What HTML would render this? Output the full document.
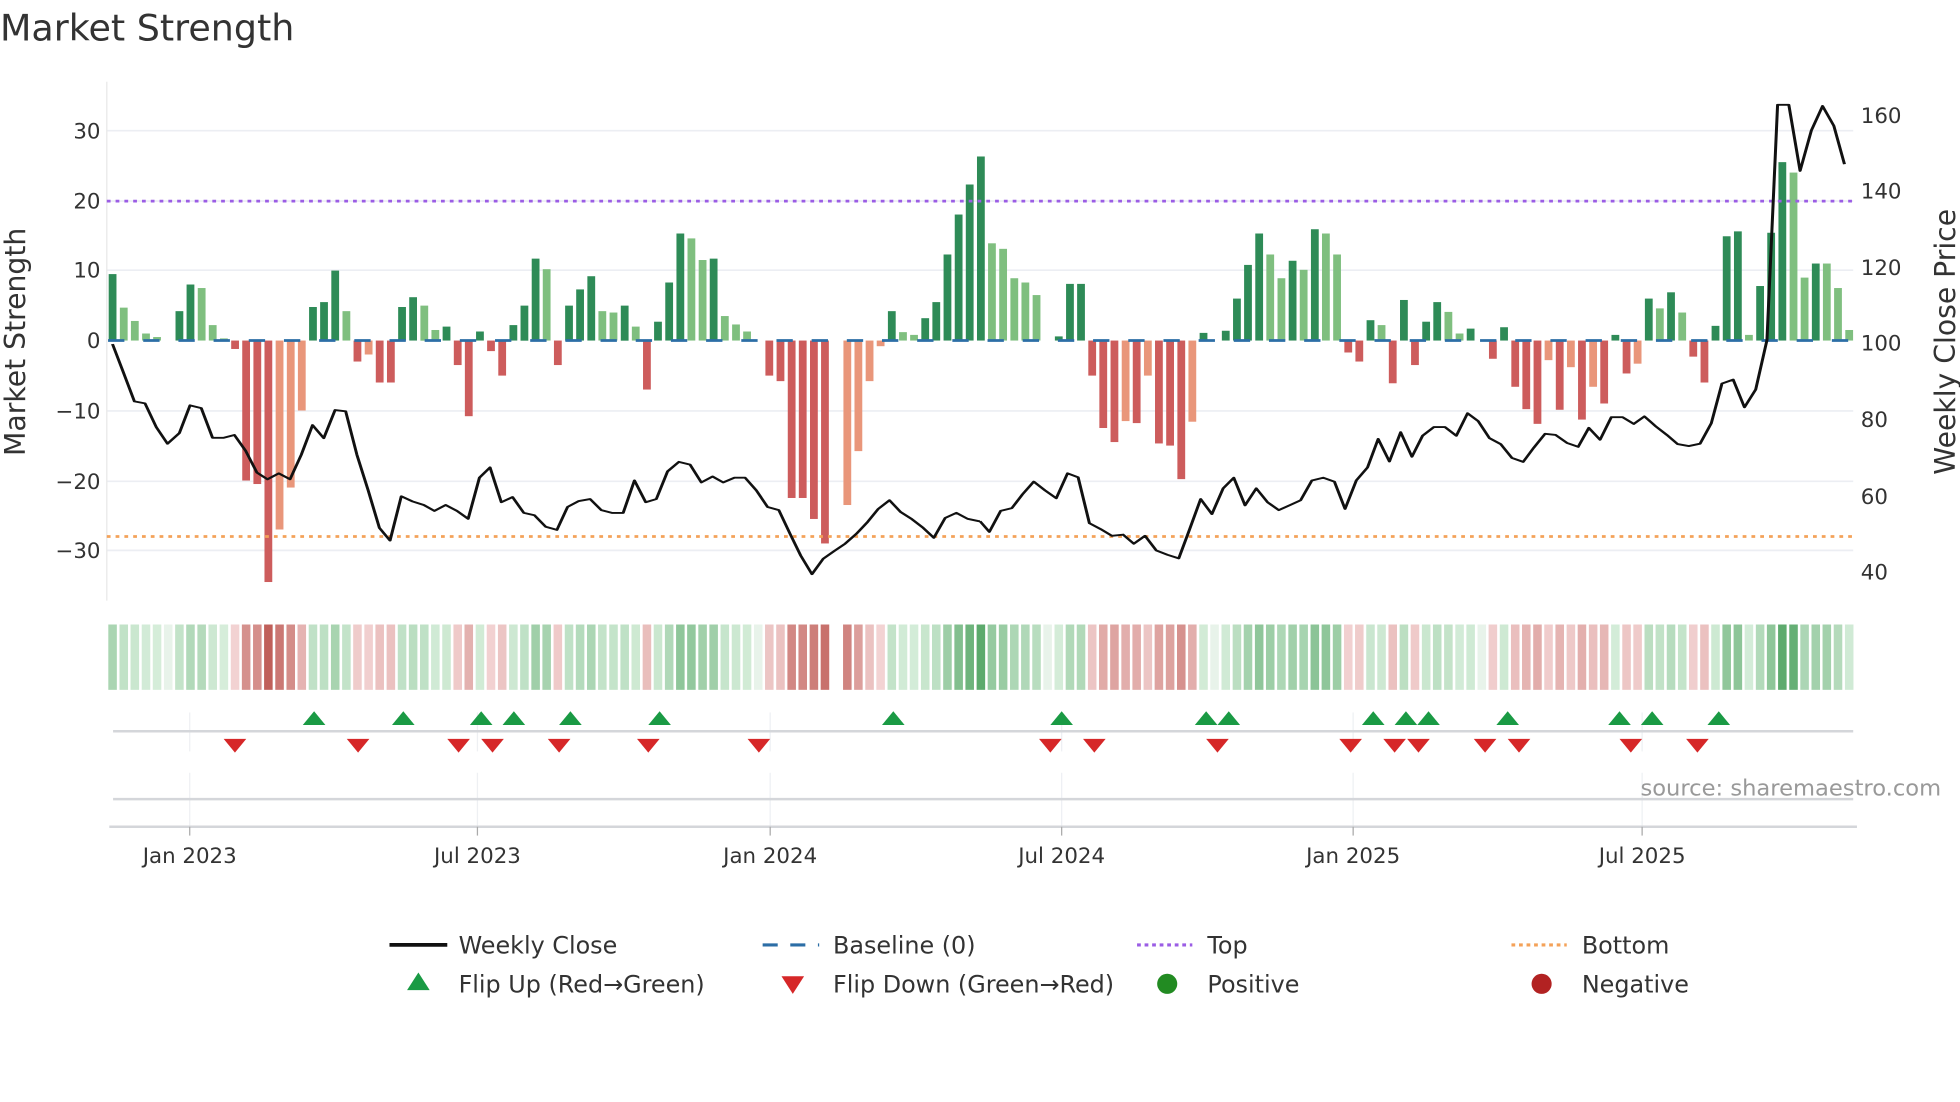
<!DOCTYPE html>
<html><head><meta charset="utf-8"><style>
html,body{margin:0;padding:0;background:#fff;}
svg{display:block;font-family:"DejaVu Sans","Liberation Sans",sans-serif;}
</style></head><body>
<svg id="s" width="1960" height="1102" viewBox="0 0 1560 877" xmlns="http://www.w3.org/2000/svg">
<rect width="1560" height="877" fill="#fff"/>
<text x="0" y="32" font-size="29" fill="#333">Market Strength</text>
<g stroke="#eceef3" stroke-width="1.3">
<line x1="85" x2="1475" y1="104" y2="104"/><line x1="85" x2="1475" y1="160" y2="160"/>
<line x1="85" x2="1475" y1="215" y2="215"/><line x1="85" x2="1475" y1="327" y2="327"/>
<line x1="85" x2="1475" y1="383" y2="383"/><line x1="85" x2="1475" y1="438" y2="438"/>
</g>
<line x1="85" x2="85" y1="65" y2="478" stroke="#e8e8e8" stroke-width="1"/>
<g font-size="17" fill="#333" text-anchor="end">
<text x="80" y="110">30</text><text x="80" y="166">20</text><text x="80" y="221">10</text>
<text x="80" y="277">0</text><text x="80" y="333">−10</text><text x="80" y="389">−20</text><text x="80" y="444">−30</text>
</g>
<g font-size="17" fill="#333">
<text x="1481" y="98">160</text><text x="1481" y="158">140</text><text x="1481" y="219">120</text>
<text x="1481" y="279">100</text><text x="1481" y="340">80</text><text x="1481" y="401">60</text><text x="1481" y="461">40</text>
</g>
<text transform="translate(20,272) rotate(-90)" font-size="22.5" fill="#333" text-anchor="middle">Market Strength</text>
<text transform="translate(1556,272) rotate(-90)" font-size="22.5" fill="#333" text-anchor="middle">Weekly Close Price</text>
<g id="bars"></g>
<line x1="86" x2="1475" y1="271" y2="271" stroke="#2c6ea6" stroke-width="2.2" stroke-dasharray="13,15"/>
<line x1="85" x2="1475" y1="160" y2="160" stroke="#9b5de5" stroke-width="2.2" stroke-dasharray="3,4"/>
<line x1="85" x2="1475" y1="427" y2="427" stroke="#f4a259" stroke-width="2.2" stroke-dasharray="3,4"/>
<g fill="none" stroke="#111" stroke-width="2.2" stroke-linejoin="round">
<polyline transform="scale(0.4975,0.3147)" stroke-width="4.8" points="180,870 197,940 215,1015 232,1020 250,1080 268,1122 287,1095 304,1025 322,1032 340,1107 358,1107 375,1100 393,1140 411,1195 428,1212 446,1197 464,1212 482,1150 500,1075 518,1108 536,1037 553,1040 571,1150 589,1240 607,1335 624,1367 642,1255 660,1268 678,1277 695,1292 713,1277 731,1292 749,1312 767,1208 784,1182 802,1270 820,1257 838,1297 855,1303 873,1332 891,1340 908,1282 926,1267 944,1262 962,1290 979,1297 997,1297 1015,1215 1033,1270 1050,1262 1068,1192 1086,1168 1104,1175 1122,1220 1140,1205 1157,1220 1175,1208 1192,1208 1210,1240 1228,1282 1246,1290 1264,1350 1281,1405 1299,1452 1317,1413 1335,1393 1352,1375 1370,1350 1388,1320 1405,1287 1423,1265 1441,1295 1459,1313 1477,1335 1494,1360 1512,1310 1530,1297 1548,1312 1566,1318 1568,1318"/>
<polyline transform="translate(780,0) scale(0.4975,0.3147)" stroke-width="4.8" points="0,1318 15,1345 33,1292 51,1285 68,1250 86,1218 104,1240 122,1260 140,1197 157,1207 175,1323 193,1338 211,1355 229,1352 246,1375 264,1355 282,1392 300,1403 318,1412 335,1340 353,1262 371,1300 389,1235 406,1208 424,1278 442,1235 460,1270 478,1290 495,1278 513,1265 531,1215 549,1208 567,1218 584,1287 602,1215 620,1182 637,1110 655,1167 673,1093 691,1155 708,1102 726,1080 744,1080 762,1102 780,1045 797,1065 815,1108 833,1123 851,1158 869,1168 886,1132 904,1097 921,1100 939,1120 957,1130 974,1082 992,1112 1010,1055 1028,1055 1046,1072 1063,1053 1081,1078 1099,1100 1116,1123 1134,1128 1152,1122 1170,1070 1187,970 1205,960 1223,1030 1241,985 1259,860 1276,265 1294,265 1312,432 1330,330 1348,268 1366,318 1383,415"/>
</g>
<g id="heat"></g>
<g stroke="#eef0f3" stroke-width="1">
<line x1="151" x2="151" y1="567" y2="598"/><line x1="380" x2="380" y1="567" y2="598"/><line x1="613" x2="613" y1="567" y2="598"/><line x1="845" x2="845" y1="567" y2="598"/><line x1="1077" x2="1077" y1="567" y2="598"/><line x1="1307" x2="1307" y1="567" y2="598"/>
<line x1="151" x2="151" y1="615" y2="658"/><line x1="380" x2="380" y1="615" y2="658"/><line x1="613" x2="613" y1="615" y2="658"/><line x1="845" x2="845" y1="615" y2="658"/><line x1="1077" x2="1077" y1="615" y2="658"/><line x1="1307" x2="1307" y1="615" y2="658"/>
</g>
<line x1="90" x2="1475" y1="582" y2="582" stroke="#d4d6da" stroke-width="2"/>
<line x1="90" x2="1475" y1="636" y2="636" stroke="#d4d6da" stroke-width="2"/>
<line x1="87" x2="1478" y1="658" y2="658" stroke="#d4d6da" stroke-width="2"/>
<g stroke="#aaa" stroke-width="1"><line x1="151" x2="151" y1="658" y2="665"/><line x1="380" x2="380" y1="658" y2="665"/><line x1="613" x2="613" y1="658" y2="665"/><line x1="845" x2="845" y1="658" y2="665"/><line x1="1077" x2="1077" y1="658" y2="665"/><line x1="1307" x2="1307" y1="658" y2="665"/></g>
<g id="flips"></g>
<text x="1545" y="633" font-size="18" fill="#999" text-anchor="end">source: sharemaestro.com</text>
<g font-size="17" fill="#333" text-anchor="middle">
<text x="151" y="687">Jan 2023</text><text x="380" y="687">Jul 2023</text><text x="613" y="687">Jan 2024</text>
<text x="845" y="687">Jul 2024</text><text x="1077" y="687">Jan 2025</text><text x="1307" y="687">Jul 2025</text>
</g>
<g font-size="19" fill="#333">
<line x1="310" x2="356" y1="752" y2="752" stroke="#111" stroke-width="3"/><text x="365" y="759">Weekly Close</text>
<line x1="607" x2="652" y1="752" y2="752" stroke="#2c6ea6" stroke-width="2.5" stroke-dasharray="12,10"/><text x="663" y="759">Baseline (0)</text>
<line x1="905" x2="949" y1="752" y2="752" stroke="#9b5de5" stroke-width="2.5" stroke-dasharray="3,3"/><text x="961" y="759">Top</text>
<line x1="1203" x2="1247" y1="752" y2="752" stroke="#f4a259" stroke-width="2.5" stroke-dasharray="3,3"/><text x="1259" y="759">Bottom</text>
<polygon points="324,788 342,788 333,774" fill="#1a9a44"/><text x="365" y="790">Flip Up (Red→Green)</text>
<polygon points="622,777 640,777 631,791" fill="#d62728"/><text x="663" y="790">Flip Down (Green→Red)</text>
<circle cx="929" cy="783" r="8" fill="#228b22"/><text x="961" y="790">Positive</text>
<circle cx="1227" cy="783" r="8" fill="#b22222"/><text x="1259" y="790">Negative</text>
</g>
</svg>
<script>
var V="9.5G 4.7L 2.8L 1L .5L 0Z 4.2G 8G 7.5L 2.2L .3L -1.2R -20R -20.5R -34.5R -27S -21S -10S 4.8G 5.5G 10G 4.2L -3R -2S -6R -6R 4.8G 6.2G 5L 1.5L 2G -3.5R -10.8R 1.3G -1.5R -5R 2.2G 5G 11.7G 10.2L -3.5R 5G 7.3G 9.2G 4.2L 4L 5G 2L -7R 2.7G 8.3G 15.3G 14.6L 11.5L 11.7G 3.5L 2.3L 1.3L 0Z -5R -5.8R -22.5R -22.5R -25.5R -29R 0Z -23.5S -15.8S -5.8S -0.8S 4.2G 1.2L .8L 3.2G 5.5G 12.3G 18G 22.3G 26.3G 13.9L 13.1L 8.9L 8.3L 6.5L 0Z .6G 8.1G 8.1G -5R -12.5R -14.5R -11.5S -11.8R -5S -14.7R -15R -19.8R -11.6S 1.1G 0Z 1.4G 6G 10.8G 15.3G 12.3L 8.9L 11.4G 10.1L 15.9G 15.3L 12.3L -1.7R -3R 2.9G 2.2L -6.1R 5.8G -3.5R 2.7G 5.5G 4.1L 1L 1.7G 0Z -2.6R 1.9G -6.6R -9.8R -11.9R -2.8S -9.9R -3.8S -11.3R -6.6S -9R .8G -4.7R -3.3S 6G 4.6L 6.9G 4L -2.3R -6R 2.1G 14.9G 15.6G .8L 7.8G 15.4G 25.5G 24L 9L 11G 11L 7.5L 1.5L".split(" ");
var C={G:"#2e8b57",L:"#7fbf7f",R:"#cd5c5c",S:"#e9967a",Z:"#fff"};
var b="",h="";
function mix(a,c,t){return "rgb("+a.map(function(x,i){return Math.round(x+(c[i]-x)*t)}).join(",")+")";}
for(var i=0;i<V.length;i++){var s=V[i],v=parseFloat(s),t=s.slice(-1);var x=89.6+8.86*i;
 if(v!==0){var y=v>0?271-v*5.57:271,hh=Math.abs(v)*5.57;b+='<rect x="'+(x-3.1).toFixed(1)+'" y="'+y.toFixed(1)+'" width="6.2" height="'+hh.toFixed(1)+'" fill="'+C[t]+'"/>';}
 var col;
 if(v>0)col=mix([215,238,219],[92,170,108],Math.min(1,v/26));
 else if(v<0)col=mix([244,214,214],[192,96,90],Math.min(1,-v/34));
 else col= i==65?"#fff":"#e8f3ea";
 h+='<rect x="'+(x-3.4).toFixed(1)+'" y="497" width="6.8" height="52" fill="'+col+'"/>';
}
document.getElementById("bars").innerHTML=b;
document.getElementById("heat").innerHTML=h;
var up=[250,321,383,409,454,525,711,845,960,978,1093,1119,1137,1200,1289,1315,1368],dn=[187,285,365,392,445,516,604,836,871,969,1075,1110,1129,1182,1209,1298,1351],f="";
up.forEach(function(x){f+='<polygon points="'+(x-9)+',577 '+(x+9)+',577 '+x+',566" fill="#1a9a44"/>';});
dn.forEach(function(x){f+='<polygon points="'+(x-9)+',588 '+(x+9)+',588 '+x+',599" fill="#d62728"/>';});
document.getElementById("flips").innerHTML=f;
</script>
</body></html>
